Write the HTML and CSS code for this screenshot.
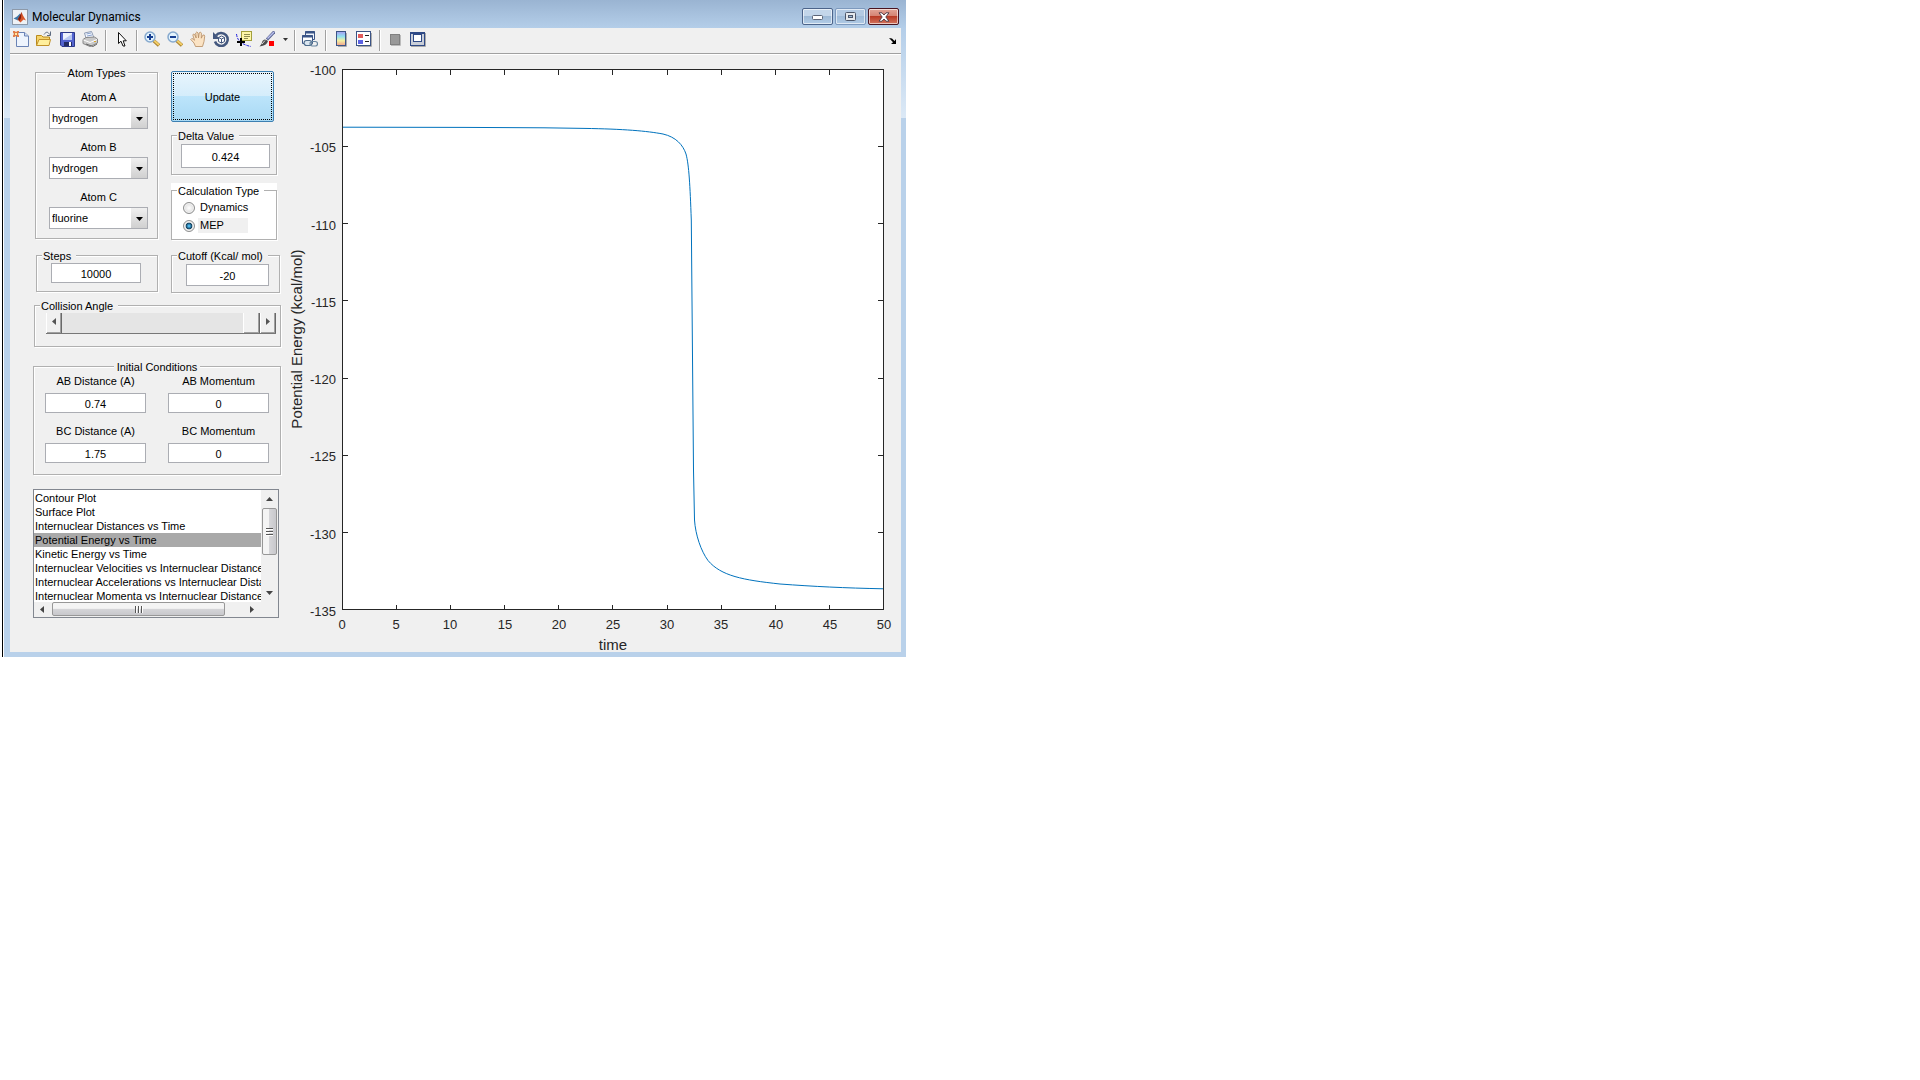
FILE: index.html
```html
<!DOCTYPE html>
<html lang="en">
<head>
<meta charset="utf-8">
<title>Molecular Dynamics</title>
<link rel="stylesheet" href="styles.css">
</head>
<body>
<main class="window">
  <header class="titlebar">
    <svg class="app-icon" width="16" height="16" viewBox="0 0 16 16" aria-hidden="true">
      <rect x=".5" y=".5" width="15" height="15" fill="#eef2f6" stroke="#8d99a8"/>
      <path d="M1.500 9.500L5 7.500 8 4.500 9 8 6 11.500z" fill="#3f78a8"/>
      <path d="M5.500 10.500L8 6.500 9.500 3 11 6.500 14 11.500 11.500 10.500 8.500 13.500z" fill="#d8572a"/>
      <path d="M6 10L8.500 5.500 9.500 3 9 9 7.500 12z" fill="#7c1d10"/>
    </svg>
    <h1 class="title">Molecular Dynamics</h1>
    <div class="caption-buttons">
      <button class="caption" type="button" aria-label="Minimize"><svg width="13" height="7" viewBox="0 0 13 7"><rect x="1.500" y="2.500" width="10" height="4" rx="1" fill="#fff" stroke="#5b6577"/></svg></button>
      <button class="caption caption-max" type="button" aria-label="Maximize"><svg width="11" height="9" viewBox="0 0 11 9"><rect x=".5" y=".5" width="10" height="8" rx="1" fill="#e4e8ec" stroke="#4c566a"/><rect x="3.500" y="3.500" width="4" height="2" fill="#9bb7d4" stroke="#4c566a"/></svg></button>
      <button class="caption caption-close" type="button" aria-label="Close"><svg width="12" height="10" viewBox="0 0 12 10"><path d="M1 .8H4L6 3 8 .8H11L7.800 5 11 9.200H8L6 7 4 9.200H1L4.200 5z" fill="#fff" stroke="#56404a"/></svg></button>
    </div>
  </header>

  <div class="client">
    <nav class="toolbar" aria-label="Figure toolbar">
      <button class="tool" type="button" aria-label="New Figure"><svg width="16" height="16" viewBox="0 0 16 16"><path d="M3.500 1.500H11.500L15.500 5V15.500H3.500z" fill="#eef4fd" stroke="#6a83b5"/><path d="M11.500 1.500V5H15.500" fill="#cfdcf2" stroke="#6a83b5"/><path d="M0 0H1.500L3 1 4.500 0H6V1.500L5 3 6 4.500V6H4.500L3 5 1.500 6H0V4.500L1 3 0 1.500z" fill="#e07a42"/><rect x="2" y="2" width="2" height="2" fill="#ffe9a0"/></svg></button>
      <button class="tool" type="button" aria-label="Open File"><svg width="16" height="16" viewBox="0 0 16 16"><path d="M.5 14.500V4.500H5.500L7 6H13.500V9" fill="#f5d36a" stroke="#b98a1c"/><path d="M.5 14.500L3 8.500H14.500L13 14.500z" fill="#ffef9c" stroke="#c1912a"/><path d="M8 3.500C10 .5 12 .5 13.500 3.500M14.500 .5V4.500H11" fill="none" stroke="#5d6b80"/></svg></button>
      <button class="tool" type="button" aria-label="Save Figure"><svg width="16" height="16" viewBox="0 0 16 16"><path d="M1.500 1.500H15.500V15.500H3L1.500 14z" fill="#5363cf" stroke="#2c3888"/><rect x="4" y="2" width="9" height="7" fill="#eef2fd"/><path d="M4 9L13 3V9z" fill="#b7c6f0"/><rect x="5" y="11" width="8" height="4" fill="#232c63"/><rect x="10" y="11" width="2" height="4" fill="#fff"/></svg></button>
      <button class="tool" type="button" aria-label="Print Figure"><svg width="16" height="16" viewBox="0 0 16 16"><path d="M4 7L2.500 2 9.500 .5 12 7z" fill="#f7faff" stroke="#8d9bb4"/><path d="M4.500 3L9 2M5 5L10 4" stroke="#8aa3cf"/><path d="M1 8.500L4 6.500 12.500 6 15.500 8V12L8 15.500 1 12.500z" fill="#c9c9c9" stroke="#888"/><path d="M1.500 9L8 11.500 15 8.500" fill="none" stroke="#fff"/><path d="M4 13L11 15.500 15 13" fill="none" stroke="#666"/><rect x="12" y="10" width="2" height="1" fill="#dca72d"/></svg></button>
      <span class="sep"></span>
      <button class="tool" type="button" aria-label="Edit Plot"><svg width="16" height="16" viewBox="0 0 16 16"><path d="M5.500 1.500V12.500L8 10.200 10 15H12L10.200 9.800H13.300z" fill="#fff" stroke="#111"/></svg></button>
      <span class="sep"></span>
      <button class="tool" type="button" aria-label="Zoom In"><svg width="16" height="16" viewBox="0 0 16 16"><path d="M9.500 9.500L15 14.500" stroke="#a8812f" stroke-width="3.500"/><path d="M10 9.500L15 14" stroke="#f3ce68" stroke-width="2"/><circle cx="6" cy="6" r="5" fill="#e3f3fd" stroke="#86a9ce" stroke-width="1.500"/><path d="M3 6H9M6 3V9" stroke="#173f91" stroke-width="2"/></svg></button>
      <button class="tool" type="button" aria-label="Zoom Out"><svg width="16" height="16" viewBox="0 0 16 16"><path d="M9.500 9.500L15 14.500" stroke="#a8812f" stroke-width="3.500"/><path d="M10 9.500L15 14" stroke="#f3ce68" stroke-width="2"/><circle cx="6" cy="6" r="5" fill="#e3f3fd" stroke="#86a9ce" stroke-width="1.500"/><path d="M3 6H9" stroke="#173f91" stroke-width="2"/></svg></button>
      <button class="tool" type="button" aria-label="Pan"><svg width="16" height="16" viewBox="0 0 16 16"><path d="M5.500 15.500L4 12 .8 8.500Q1.500 6.800 3.200 8L4.500 9.300 2.800 4Q3.500 2 4.800 3.700L6.200 7 5.700 2Q6.800 -.2 8 2L8.500 6.800 9.200 1.800Q10.500 .2 11.400 2.200L11.300 7.200 12.800 4.200Q14.500 3.200 14.700 5.200L14 10.500 12.500 15.500z" fill="#fbe3c4" stroke="#b58a60" stroke-width=".8"/></svg></button>
      <button class="tool" type="button" aria-label="Rotate 3D"><svg width="16" height="16" viewBox="0 0 16 16"><path d="M3 4.500A6.500 6.500 0 1 1 2 10.500" fill="none" stroke="#44587f" stroke-width="2.500"/><path d="M0 1V8H7z" fill="#44587f"/><path d="M5.500 6.500L8.500 5 11.500 6.500V10.500L8.500 12 5.500 10.500zM5.500 6.500L8.500 8 11.500 6.500M8.500 8V12" fill="#fff" stroke="#44587f"/></svg></button>
      <button class="tool" type="button" aria-label="Data Cursor"><svg width="16" height="16" viewBox="0 0 16 16"><path d="M.5 3Q1 8 4.500 11T15 15.500" fill="none" stroke="#2222dd" stroke-dasharray="3 1"/><rect x="5.500" y=".5" width="10" height="9" fill="#fff7a8" stroke="#a3a03c"/><path d="M8 3.500H14M8 5.500H14M8 7.500H12" stroke="#8f8d50"/><path d="M1 11H9M5 7V15" stroke="#000" stroke-width="2"/></svg></button>
      <button class="tool" type="button" aria-label="Brush"><svg width="16" height="16" viewBox="0 0 16 16"><path d="M15.500 .5L8 8.500" stroke="#596391" stroke-width="3"/><path d="M15 1L8.500 7.500" stroke="#b9c0ee" stroke-width="1.500"/><path d="M9 10Q8 14.500 .5 15.500 3 13 3.500 10 5.500 7 9 10z" fill="#4c4c4c"/><path d="M3 13L6 9.500" stroke="#ddd"/><rect x="10" y="10" width="5" height="5" fill="#f00"/></svg></button>
      <button class="tool tool-drop" type="button" aria-label="Brush options"><svg width="5" height="3" viewBox="0 0 5 3"><path d="M0 0H5L2.500 3z" fill="#333"/></svg></button>
      <span class="sep"></span>
      <button class="tool" type="button" aria-label="Link Plot"><svg width="16" height="16" viewBox="0 0 16 16"><path d="M3.500 .5H12.500V8.500H3.500z" fill="#eef4fc" stroke="#3b5486"/><path d="M3 1.500H13" stroke="#3b5486" stroke-width="2"/><path d="M.5 4.500H10.500V12.500H.5z" fill="#fff" stroke="#3b5486"/><path d="M0 5.500H11" stroke="#3b5486" stroke-width="2"/><rect x="2" y="9.500" width="8" height="5" rx="2.500" fill="#dbe6f0" stroke="#4e6c8b" stroke-width="1.200"/><rect x="8" y="10.500" width="7.500" height="4.500" rx="2.200" fill="none" stroke="#68859f" stroke-width="1.200"/></svg></button>
      <span class="sep"></span>
      <button class="tool" type="button" aria-label="Insert Colorbar"><svg width="16" height="16" viewBox="0 0 16 16"><defs><linearGradient id="cbar" x1="0" y1="0" x2="0" y2="1"><stop offset="0" stop-color="#a79cf0"/><stop offset=".35" stop-color="#8fe0f0"/><stop offset=".65" stop-color="#f3f0a0"/><stop offset="1" stop-color="#f0a08e"/></linearGradient></defs><path d="M5 15.500H13.500V2" fill="none" stroke="#aaa"/><rect x="3.500" y=".5" width="9" height="14" fill="url(#cbar)" stroke="#3b5486"/></svg></button>
      <button class="tool" type="button" aria-label="Insert Legend"><svg width="16" height="16" viewBox="0 0 16 16"><path d="M2 15.500H15.500V2" fill="none" stroke="#aaa"/><rect x=".5" y=".5" width="14" height="14" fill="#fff" stroke="#3b5486"/><rect x="2" y="3" width="5" height="4" fill="#e25c5c"/><rect x="2" y="9" width="5" height="4" fill="#5c62e2"/><path d="M9 4.500H13M9 10.500H13" stroke="#222"/></svg></button>
      <span class="sep"></span>
      <button class="tool" type="button" aria-label="Hide Plot Tools"><svg width="16" height="16" viewBox="0 0 16 16"><path d="M4 14.500H13.500V4" fill="none" stroke="#bbb"/><rect x="3.500" y="3.500" width="9" height="10" fill="#999" stroke="#808080"/></svg></button>
      <button class="tool" type="button" aria-label="Show Plot Tools"><svg width="16" height="16" viewBox="0 0 16 16"><path d="M1 15.500H15.500V2" fill="none" stroke="#aaa"/><rect x=".5" y="1.500" width="14" height="13" fill="#c9ced8" stroke="#2f4a86"/><path d="M0 2H15" stroke="#2f4a86" stroke-width="2"/><rect x="3.500" y="3.500" width="8" height="7" fill="#fff" stroke="#2f4a86"/></svg></button>
      <button class="tool tool-dock" type="button" aria-label="Dock Figure"><svg width="8" height="6" viewBox="0 0 8 6"><path d="M0 0L3 .5 5.500 3 7 1V6H2L4 4.300z" fill="#000"/></svg></button>
    </nav>

    <div class="content">
      <form class="controls">
        <div class="settings">
          <div class="column column-left">
            <fieldset class="panel atoms">
              <legend class="legend legend-center">Atom Types</legend>
              <div class="atom"><label for="atomA">Atom A</label><span class="combo"><select id="atomA"><option>hydrogen</option><option>fluorine</option></select></span></div>
              <div class="atom"><label for="atomB">Atom B</label><span class="combo"><select id="atomB"><option>hydrogen</option><option>fluorine</option></select></span></div>
              <div class="atom"><label for="atomC">Atom C</label><span class="combo"><select id="atomC"><option>fluorine</option><option>hydrogen</option></select></span></div>
            </fieldset>
            <fieldset class="panel steps">
              <legend class="legend">Steps</legend>
              <input class="field" type="text" value="10000" aria-label="Steps">
            </fieldset>
          </div>
          <div class="column column-right">
            <button class="update" type="button">Update</button>
            <fieldset class="panel delta">
              <legend class="legend">Delta Value</legend>
              <input class="field" type="text" value="0.424" aria-label="Delta Value">
            </fieldset>
            <div class="calc-back">
              <fieldset class="panel calc">
                <legend class="legend">Calculation Type</legend>
                <label class="choice"><input type="radio" name="calc"><span>Dynamics</span></label>
                <label class="choice"><input type="radio" name="calc" checked><span class="picked">MEP</span></label>
              </fieldset>
            </div>
            <fieldset class="panel cutoff">
              <legend class="legend">Cutoff (Kcal/ mol)</legend>
              <input class="field" type="text" value="-20" aria-label="Cutoff (Kcal/ mol)">
            </fieldset>
          </div>
        </div>

        <fieldset class="panel angle">
          <legend class="legend">Collision Angle</legend>
          <div class="slider">
            <button class="step" type="button" aria-label="Decrease angle"><svg width="4" height="7" viewBox="0 0 4 7"><path d="M4 0V7L0 3.500z" fill="#555"/></svg></button>
            <input type="range" min="0" max="180" value="180" aria-label="Collision Angle">
            <button class="step" type="button" aria-label="Increase angle"><svg width="4" height="7" viewBox="0 0 4 7"><path d="M0 0V7L4 3.500z" fill="#555"/></svg></button>
          </div>
        </fieldset>

        <fieldset class="panel initial">
          <legend class="legend legend-center">Initial Conditions</legend>
          <div class="initial-grid">
            <div class="quantity"><label for="abd">AB Distance (A)</label><input class="field" id="abd" type="text" value="0.74"></div>
            <div class="quantity"><label for="abm">AB Momentum</label><input class="field" id="abm" type="text" value="0"></div>
            <div class="quantity"><label for="bcd">BC Distance (A)</label><input class="field" id="bcd" type="text" value="1.75"></div>
            <div class="quantity"><label for="bcm">BC Momentum</label><input class="field" id="bcm" type="text" value="0"></div>
          </div>
        </fieldset>

        <div class="listbox">
          <select class="plots" size="8" aria-label="Plot type">
            <option>Contour Plot</option>
            <option>Surface Plot</option>
            <option>Internuclear Distances vs Time</option>
            <option selected>Potential Energy vs Time</option>
            <option>Kinetic Energy vs Time</option>
            <option>Internuclear Velocities vs Internuclear Distance</option>
            <option>Internuclear Accelerations vs Internuclear Distance</option>
            <option>Internuclear Momenta vs Internuclear Distance</option>
          </select>
          <div class="scroll scroll-v">
            <svg width="7" height="4" viewBox="0 0 7 4"><path d="M3.500 0L7 4H0z" fill="#444"/></svg>
            <span class="thumb"><svg width="7" height="8" viewBox="0 0 7 8"><path d="M0 .5H7M0 3.500H7M0 6.500H7" stroke="#555"/><path d="M0 1.500H7M0 4.500H7M0 7.500H7" stroke="#fff"/></svg></span>
            <svg class="arrow-end" width="7" height="4" viewBox="0 0 7 4"><path d="M0 0H7L3.500 4z" fill="#444"/></svg>
          </div>
          <div class="scroll scroll-h">
            <svg width="4" height="7" viewBox="0 0 4 7"><path d="M4 0V7L0 3.500z" fill="#444"/></svg>
            <span class="thumb"><svg width="8" height="7" viewBox="0 0 8 7"><path d="M.5 0V7M3.500 0V7M6.500 0V7" stroke="#555"/><path d="M1.500 0V7M4.500 0V7M7.500 0V7" stroke="#fff"/></svg></span>
            <svg class="arrow-end" width="4" height="7" viewBox="0 0 4 7"><path d="M0 0V7L4 3.500z" fill="#444"/></svg>
          </div>
        </div>
      </form>

      <svg class="plot" viewBox="0 0 617 597" role="img" aria-label="Potential energy against time">
        <rect x="58.500" y="14.500" width="541" height="540" fill="#fff"/>
        <path class="curve" d="M58.500 72.200L180 72.400 260 72.800 300 73.400C340 74 363 76 379 79C392 82 399 90 402 99C405 110 406 130 407.300 165L409.500 415 410.500 465C411.500 480 417 496 424 505.500C437 521 459 525 496 529C530 531.500 560 533 599.500 533.800"/>
        <rect class="axis" x="58.500" y="14.500" width="541" height="540"/>
        <path class="axis" d="M112.500 555v-5M166.500 555v-5M220.500 555v-5M274.500 555v-5M328.500 555v-5M383.500 555v-5M437.500 555v-5M491.500 555v-5M545.500 555v-5M112.500 15v5M166.500 15v5M220.500 15v5M274.500 15v5M328.500 15v5M383.500 15v5M437.500 15v5M491.500 15v5M545.500 15v5M59 91.500h5M59 168.500h5M59 245.500h5M59 323.500h5M59 400.500h5M59 477.500h5M599 91.500h-5M599 168.500h-5M599 245.500h-5M599 323.500h-5M599 400.500h-5M599 477.500h-5"/>
        <g class="ticks ticks-y"><text x="52" y="20">-100</text><text x="52" y="97">-105</text><text x="52" y="175">-110</text><text x="52" y="252">-115</text><text x="52" y="329">-120</text><text x="52" y="406">-125</text><text x="52" y="484">-130</text><text x="52" y="561">-135</text></g>
        <g class="ticks"><text x="58" y="574">0</text><text x="112" y="574">5</text><text x="166" y="574">10</text><text x="221" y="574">15</text><text x="275" y="574">20</text><text x="329" y="574">25</text><text x="383" y="574">30</text><text x="437" y="574">35</text><text x="492" y="574">40</text><text x="546" y="574">45</text><text x="600" y="574">50</text></g>
        <text class="axis-title" x="329" y="595">time</text>
        <text class="axis-title" transform="translate(18 284) rotate(-90)">Potential Energy (kcal/mol)</text>
      </svg>
    </div>
  </div>
</main>
</body>
</html>
```
FILE: styles.css
```css
* { box-sizing: border-box; }

body {
  margin: 0;
  background: #fff;
  color: #000;
  font: 11px/15px "Liberation Sans", Arial, sans-serif;
}

button, input, select {
  margin: 0;
  padding: 0;
  border: 0;
  border-radius: 0;
  background: none;
  color: inherit;
  font: inherit;
}

svg { display: block; }

/* Window frame */
.window {
  max-width: 904px;
  margin-left: 2px;
  padding: 0 5px 5px 7px;
  border-left: 1px solid #000;
  box-shadow: inset 1px 0 #fff;
  background:
    linear-gradient(#9ab4d2, #b4cee9) 1px 0 / 100% 28px no-repeat,
    linear-gradient(#b4cee9, #dce9f6) 1px 28px / 100% 90px no-repeat,
    #b9d1ea;
}

.titlebar {
  display: flex;
  align-items: center;
  gap: 4px;
  height: 28px;
  padding: 6px 2px 0;
}

.title {
  flex: 1;
  margin: 0;
  font: 12px/16px Roboto, "Open Sans", sans-serif;
}

.caption-buttons {
  display: flex;
  gap: 2px;
  align-self: flex-start;
  padding-top: 2px;
}

.caption {
  display: grid;
  place-items: center;
  width: 31px;
  height: 17px;
  border: 1px solid #4c648a;
  border-radius: 2px;
  box-shadow: inset 0 0 0 1px #ffffff99;
  background: linear-gradient(#c3d6ea 50%, #9db9d6 50%, #b4cee8);
}

.caption-max {
  border-color: #7d99bd;
  background: linear-gradient(#b3cae3 50%, #9fbbd8 50%, #b0cae5);
}

.caption-close {
  border-color: #4a1420;
  background: linear-gradient(#e2a598, #d4806f 50%, #b93b25 50%, #d2745f);
}

.client { background: #f0f0f0; }

/* Toolbar */
.toolbar {
  display: flex;
  height: 26px;
  border-bottom: 1px solid #a0a0a0;
}

.tool {
  width: 23px;
  padding: 3px 3px 0;
  display: flex;
}

.tool-drop {
  width: 12px;
  padding: 10px 3px 0 4px;
}

.tool-dock {
  margin-left: auto;
  width: 16px;
  padding: 10px 4px 0;
}

.sep {
  width: 8px;
  height: 21px;
  margin-top: 2px;
  background: linear-gradient(90deg, #a0a0a0 50%, #fff 50%) 3px 0 / 2px 100% no-repeat;
}

.content {
  display: flex;
  border-top: 1px solid #fff;
}

/* Control column */
.controls {
  flex: none;
  width: 274px;
  padding: 10px 3px 0 23px;
}

.settings {
  display: flex;
  gap: 13px;
  padding-left: 2px;
}

.column-left { width: 123px; }
.column-right { width: 109px; }

.panel {
  min-width: 0;
  margin: 0;
  padding: 0;
  border: 1px solid #b0b0b0;
  box-shadow: 1px 1px #fff, inset 1px 1px #fff;
}

.legend {
  margin-left: 5px;
  padding: 2px 5px 0 1px;
  background: #f0f0f0;
  line-height: 13px;
}

.legend-center {
  margin: 0 auto;
  padding: 2px 3px 0;
}

.atoms {
  display: flex;
  flex-direction: column;
  gap: 10px;
  height: 174px;
}

.atoms > .legend + .atom { margin-top: 10px; }

.atom {
  display: flex;
  flex-direction: column;
  gap: 2px;
  width: 99px;
  margin: 0 0 1px 13px;
  text-align: center;
}

.combo {
  position: relative;
  height: 22px;
  border: 1px solid #abadb3;
  background: linear-gradient(#f0f0f0, #d0d0d0) right / 16px 100% no-repeat #fff;
}

.combo::after {
  content: "";
  position: absolute;
  top: 9px;
  right: 4px;
  width: 7px;
  height: 4px;
  background: #000;
  clip-path: polygon(0 0, 100% 0, 50% 100%);
  pointer-events: none;
}

.combo select {
  appearance: none;
  width: 100%;
  height: 100%;
  padding: 1px 0 0 2px;
}

.field {
  display: block;
  height: 20px;
  padding-top: 1px;
  border: 1px solid #abadb3;
  background: #fff;
  text-align: center;
}

.steps {
  width: 122px;
  height: 44px;
  margin: 9px 0 0 1px;
}

.steps .field { width: 90px; margin-left: 14px; }

.update {
  width: 103px;
  height: 51px;
  margin: 6px 0;
  padding-top: 1px;
  border: 1px solid #3c7fb1;
  border-radius: 2px;
  outline: 1px dotted #000;
  outline-offset: -3px;
  background: linear-gradient(#e8f5fd, #d5edfb 48%, #bde5fb 48%, #a8d9f4);
}

.delta { width: 106px; height: 47px; }
.delta .field { width: 89px; height: 24px; margin: 1px 0 0 9px; }

.calc-back {
  width: 106px;
  margin: 8px 0;
  background: #fff;
}

.calc { height: 57px; }
.calc .legend { background: #fff; }

.choice {
  display: flex;
  align-items: center;
  gap: 3px;
  height: 18px;
  padding: 1px 0 0 11px;
}

.choice input {
  appearance: none;
  width: 12px;
  height: 12px;
  border: 1px solid #8e8f8f;
  border-radius: 50%;
  background: radial-gradient(#fff, #d0d0d0);
  box-shadow: inset 0 0 0 1px #f4f4f4;
}

.choice input:checked {
  background: radial-gradient(#4fb5e8 10%, #10405f 42%, #e0e0e0 52%);
}

.choice span { padding-left: 2px; }
.picked { width: 50px; background: #f0f0f0; }

.cutoff { width: 109px; height: 45px; }
.cutoff .field { width: 83px; height: 22px; margin: 1px 0 0 14px; }

.angle {
  height: 49px;
  margin: 5px 0 0 1px;
}

.slider {
  display: flex;
  height: 21px;
  margin: 0 4px 0 11px;
  border-bottom: 1px solid #777;
  background: #e5e5e5;
}

.step {
  display: grid;
  place-items: center;
  width: 16px;
  padding-bottom: 3px;
  border-right: 1px solid #696969;
  border-left: 1px solid #fff;
  box-shadow: inset -1px -1px #a0a0a0;
  background: #f0f0f0;
}

.slider input {
  appearance: none;
  flex: 1;
  min-width: 0;
  height: 20px;
}

.slider input::-webkit-slider-thumb {
  appearance: none;
  width: 17px;
  height: 20px;
  border-right: 1px solid #696969;
  border-left: 1px solid #fff;
  box-shadow: inset -1px -1px #a0a0a0;
  background: #f0f0f0;
}

.initial { height: 116px; margin-top: 12px; }

.initial-grid {
  display: grid;
  grid-template-columns: 101px 101px;
  gap: 11px 22px;
  padding-left: 11px;
  text-align: center;
}

.quantity {
  display: flex;
  flex-direction: column;
  gap: 4px;
}

/* Plot list */
.listbox {
  display: grid;
  grid-template: 112px 15px / 1fr 17px;
  width: 246px;
  margin-top: 14px;
  border: 1px solid #828790;
  background: #f0f0f0;
}

.plots {
  appearance: none;
  width: 100%;
  height: 112px;
  padding-top: 1px;
  overflow: hidden;
  background: #fff;
}

.plots option {
  height: 14px;
  min-height: 14px;
  padding: 1px 1px 0;
  line-height: 14px;
}

.plots option:checked {
  background: linear-gradient(#a9a9a9, #a9a9a9);
  color: #000;
}

.scroll {
  display: flex;
  align-items: center;
}

.scroll-v { flex-direction: column; padding: 7px 1px; }
.scroll-h { padding: 0 7px 1px 6px; }

.thumb {
  display: grid;
  place-items: center;
  border: 1px solid #979797;
  border-radius: 2px;
}

.scroll-v .thumb {
  width: 15px;
  height: 47px;
  margin-top: 7px;
  background: linear-gradient(90deg, #f4f4f4 45%, #d5d5d8 50%, #c8c8cc);
}

.scroll-h .thumb {
  width: 173px;
  height: 14px;
  margin-left: 8px;
  background: linear-gradient(#f4f4f4 45%, #d5d5d8 50%, #c8c8cc);
}

.scroll-v .arrow-end { margin-top: auto; }
.scroll-h .arrow-end { margin-left: auto; }

/* Plot */
.plot {
  flex: 1;
  min-width: 0;
  font-family: "Liberation Sans", Arial, sans-serif;
  fill: #262626;
}

.axis { fill: none; stroke: #262626; }
.curve { fill: none; stroke: #0072bd; }
.ticks { font-size: 13px; text-anchor: middle; }
.ticks-y { text-anchor: end; }
.axis-title { font-size: 15px; text-anchor: middle; }
```
